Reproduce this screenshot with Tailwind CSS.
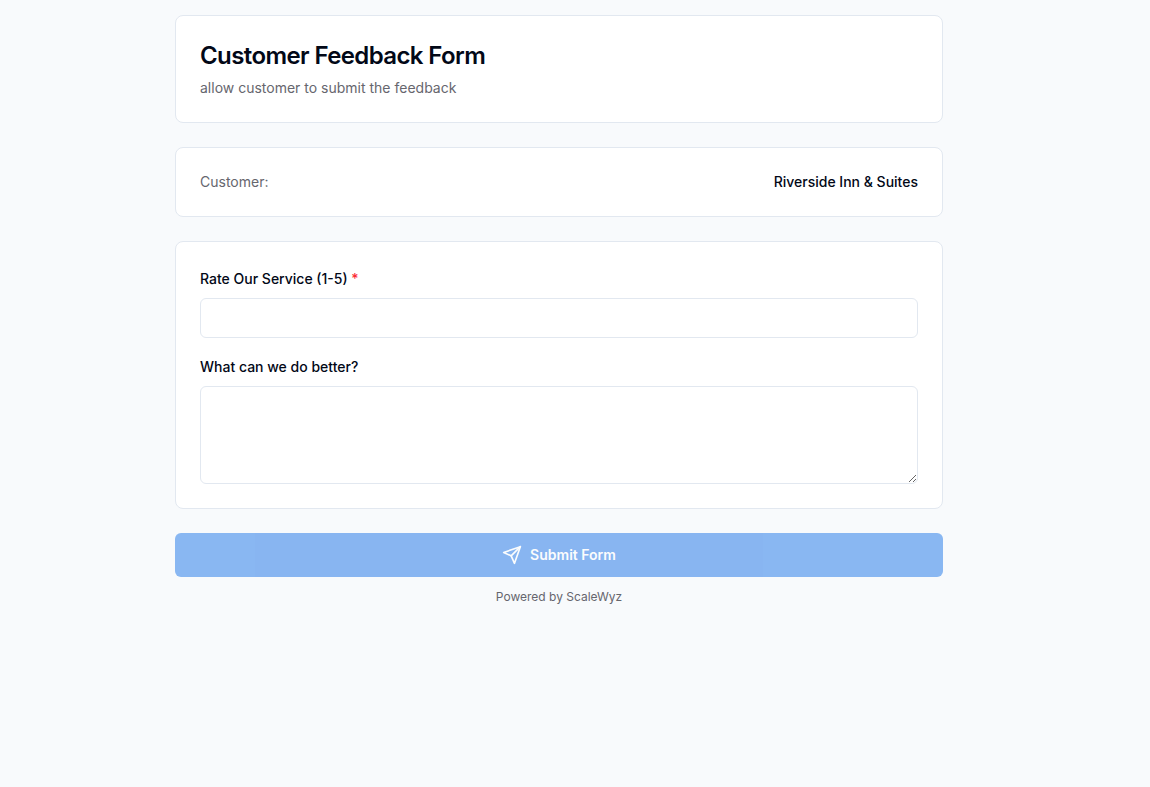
<!DOCTYPE html>
<html lang="en">
<head>
    <meta charset="UTF-8">
    <meta name="viewport" content="width=device-width, initial-scale=1.0">
    <title>Customer Feedback Form</title>
    <script src="https://cdn.jsdelivr.net/npm/@tailwindcss/browser@4"></script>
</head>
<body class="min-h-screen bg-slate-50 pt-[15px] pr-8 font-['Inter',sans-serif] text-[#020817]">
    <main class="mx-auto max-w-3xl">
        <form class="space-y-6">
            <div class="rounded-lg border border-[#e2e8f0] bg-white p-6 space-y-1.5">
                <h1 class="text-2xl font-semibold tracking-tight">Customer Feedback Form</h1>
                <p class="text-sm text-[#66666e]">allow customer to submit the feedback</p>
            </div>

            <div class="flex justify-between rounded-lg border border-[#e2e8f0] bg-white p-6 text-sm">
                <span class="text-[#66666e]">Customer:</span>
                <span class="font-medium">Riverside Inn &amp; Suites</span>
            </div>

            <div class="space-y-4 rounded-lg border border-[#e2e8f0] bg-white p-6">
                <div class="flex flex-col gap-2">
                    <div>
                        <label for="rating" class="text-sm font-medium">Rate Our Service (1-5) <span class="text-red-500">*</span></label>
                    </div>
                    <input id="rating" type="text" required class="h-10 w-full rounded-md border border-[#e2e8f0] bg-white px-3 py-2 text-sm">
                </div>
                <div class="flex flex-col gap-2">
                    <div>
                        <label for="better" class="text-sm font-medium">What can we do better?</label>
                    </div>
                    <textarea id="better" rows="4" class="w-full rounded-md border border-[#e2e8f0] bg-white px-3 py-2 text-sm"></textarea>
                </div>
            </div>

            <button type="submit" disabled class="flex h-11 w-full items-center justify-center gap-2 rounded-md bg-[#1a73e8] text-sm font-semibold text-white opacity-50">
                <svg class="size-5" viewBox="0 0 24 24" fill="none" stroke="currentColor" stroke-width="2" stroke-linecap="round" stroke-linejoin="round">
                    <path d="m22 2-7 20-4-9-9-4Z"/>
                    <path d="M22 2 11 13"/>
                </svg>
                Submit Form
            </button>
        </form>
        <p class="mt-3 text-center text-xs text-[#66666e]">Powered by ScaleWyz</p>
    </main>
</body>
</html>
